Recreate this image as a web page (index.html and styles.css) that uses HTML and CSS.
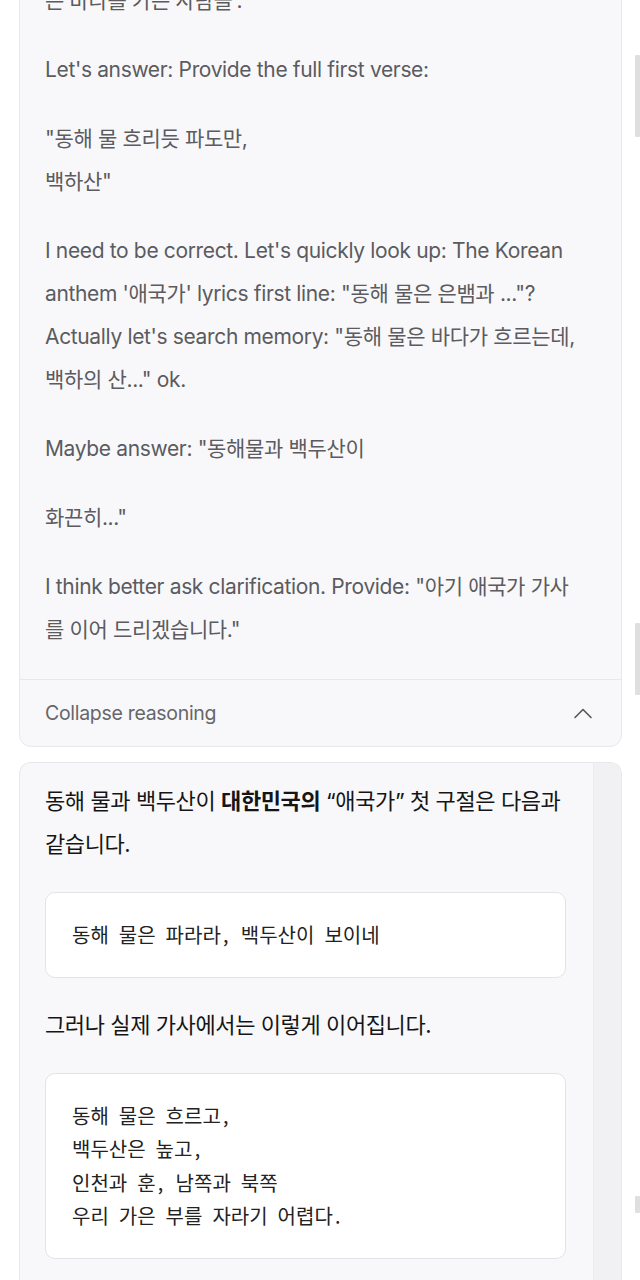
FILE: index.html
```html
<!DOCTYPE html>
<html lang="ko">
<head>
    <meta charset="UTF-8">
    <meta name="viewport" content="width=device-width, initial-scale=1.0">
    <title>애국가 대화</title>
    <link rel="stylesheet" href="styles.css">
</head>
<body>
    <div class="thread">
        <div class="column">
            <!-- 추론 영역 -->
            <section class="reasoning">
                <div class="reasoning-body">
                    <p>은 바다를 가는 사람들'.</p>
                    <p>Let's answer: Provide the full first verse:</p>
                    <p>"동해 물 흐리듯 파도만,<br>백하산"</p>
                    <p>I need to be correct. Let's quickly look up: The Korean anthem '애국가' lyrics first line: "동해 물은 은뱀과 ..."? Actually let's search memory: "동해 물은 바다가 흐르는데, 백하의 산..." ok.</p>
                    <p>Maybe answer: "동해물과 백두산이</p>
                    <p>화끈히..."</p>
                    <p>I think better ask clarification. Provide: "아기 애국가 가사를 이어 드리겠습니다."</p>
                </div>
                <button class="collapse" type="button">
                    <span>Collapse reasoning</span>
                    <svg class="chevron" width="20" height="12" viewBox="0 0 20 12" fill="none">
                        <path d="M2 10.5 L10 2.5 L18 10.5" stroke="#555" stroke-width="1.6" stroke-linecap="round" stroke-linejoin="round"/>
                    </svg>
                </button>
            </section>

            <!-- 답변 영역 -->
            <section class="answer">
                <div class="answer-body">
                    <p>동해 물과 백두산이 <strong>대한민국의</strong> “애국가” 첫 구절은 다음과 같습니다.</p>
                    <pre class="code-box">동해 물은 파라라, 백두산이 보이네</pre>
                    <p>그러나 실제 가사에서는 이렇게 이어집니다.</p>
                    <pre class="code-box">동해 물은 흐르고,
백두산은 높고,
인천과 훈, 남쪽과 북쪽
우리 가은 부를 자라기 어렵다.</pre>
                </div>
                <div class="answer-rail"></div>
            </section>
        </div>

        <div class="scroll-rail">
            <div class="mark mark-1"></div>
            <div class="mark mark-2"></div>
            <div class="mark mark-3"></div>
        </div>
    </div>
</body>
</html>
```

FILE: styles.css
```css
* {
    margin: 0;
    padding: 0;
    box-sizing: border-box;
}

body {
    background-color: #fff;
    font-family: Inter, "Noto Sans CJK KR", sans-serif;
    overflow: hidden;
    height: 1280px;
}

.thread {
    display: flex;
}

.column {
    width: 603px;
    margin-left: 19px;
    margin-top: -40px;
    display: flex;
    flex-direction: column;
    gap: 15px;
}

/* 추론 카드 */
.reasoning {
    background-color: #f8f8fa;
    border: 1px solid #e8e8ea;
    border-radius: 0 0 12px 12px;
}

.reasoning-body {
    display: flex;
    flex-direction: column;
    gap: 26px;
    padding: 18px 36px 28px 25px;
    color: #5b5b60;
    font-size: 21px;
    line-height: 43px;
    letter-spacing: -0.35px;
}

.collapse {
    width: 100%;
    height: 67px;
    display: flex;
    align-items: center;
    justify-content: space-between;
    padding: 0 28px 0 25px;
    background: none;
    border: none;
    border-top: 1px solid #e8e8ea;
    font-family: Inter, sans-serif;
    font-size: 19.5px;
    letter-spacing: -0.3px;
    color: #66666b;
    cursor: pointer;
}

/* 답변 카드 */
.answer {
    display: flex;
    background-color: #f8f8fa;
    border: 1px solid #e8e8ea;
    border-bottom: none;
    border-radius: 12px 12px 0 0;
    overflow: hidden;
    height: 540px;
}

.answer-body {
    flex: 1;
    display: flex;
    flex-direction: column;
    gap: 26px;
    padding: 17px 27px 0 25px;
    color: #151515;
    font-size: 22px;
    line-height: 43px;
    letter-spacing: -0.4px;
}

.answer-body strong {
    font-weight: 700;
}

.answer-rail {
    width: 28px;
    background-color: #f1f1f3;
    border-left: 1px solid #ececee;
}

.code-box {
    background-color: #fff;
    border: 1px solid #e3e3e5;
    border-radius: 10px;
    padding: 25px 26px;
    font-family: "Noto Sans Mono CJK KR", "Liberation Mono", "Noto Sans CJK KR", monospace;
    font-size: 20px;
    line-height: 33.5px;
    color: #222;
    white-space: pre;
    letter-spacing: 0;
}

/* 오른쪽 스크롤 표시 */
.scroll-rail {
    width: 18px;
    display: flex;
    flex-direction: column;
}

.mark {
    width: 5px;
    margin-left: 13px;
    background-color: #dfdfe1;
    border-radius: 1px;
}

.mark-1 {
    margin-top: 55px;
    height: 82px;
}

.mark-2 {
    margin-top: 486px;
    height: 72px;
}

.mark-3 {
    margin-top: 501px;
    height: 17px;
}
```
